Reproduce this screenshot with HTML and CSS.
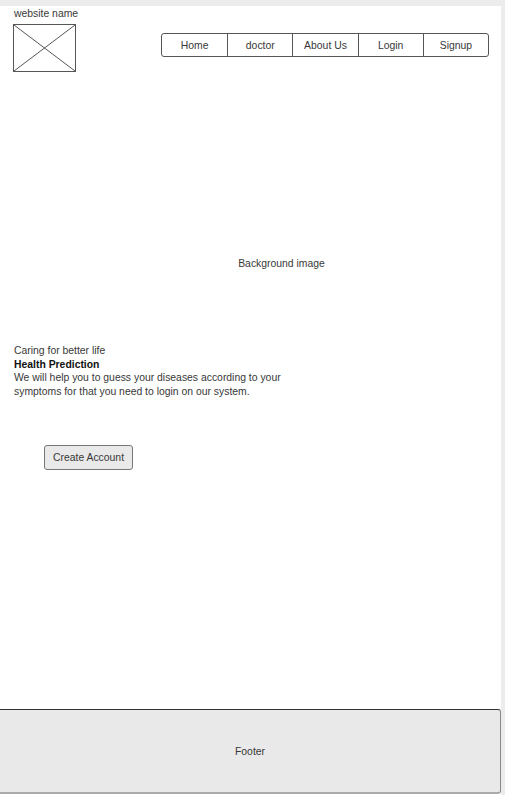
FILE: index.html
```html
<!DOCTYPE html>
<html lang="en">
<head>
<meta charset="utf-8">
<title>Health Prediction</title>
<link rel="stylesheet" href="styles.css">
</head>
<body>
<div class="page">
  <div class="canvas">
    <header class="header">
      <div class="brand">
        <div class="site-name">website name</div>
        <div class="logo">
          <svg width="61" height="46" viewBox="0 0 61 46" preserveAspectRatio="none">
            <line x1="0" y1="0" x2="61" y2="46" stroke="#555" stroke-width="1"/>
            <line x1="61" y1="0" x2="0" y2="46" stroke="#555" stroke-width="1"/>
          </svg>
        </div>
      </div>
      <nav class="nav">
        <a class="nav-item">Home</a>
        <a class="nav-item">doctor</a>
        <a class="nav-item">About Us</a>
        <a class="nav-item">Login</a>
        <a class="nav-item">Signup</a>
      </nav>
    </header>
    <section class="hero">
      <div class="bg-label">Background image</div>
    </section>
    <section class="intro">
      <div>Caring for better life</div>
      <div class="title">Health Prediction</div>
      <p class="desc">We will help you to guess your diseases according to your<br>symptoms for that you need to login on our system.</p>
    </section>
    <div class="actions">
      <button class="btn">Create Account</button>
    </div>
    <footer class="footer">Footer</footer>
  </div>
</div>
</body>
</html>
```
FILE: styles.css
```css
html, body {
  margin: 0;
  padding: 0;
}
body {
  background: #ececec;
  font-family: "Liberation Sans", Arial, sans-serif;
  font-size: 10.4px;
  color: #383838;
}
.page {
  padding-top: 6px;
  height: 795px;
  box-sizing: border-box;
}
.canvas {
  width: 501px;
  height: 789px;
  background: #fff;
  display: flex;
  flex-direction: column;
  box-sizing: border-box;
  padding-bottom: 1px;
}
.header {
  display: flex;
  align-items: flex-start;
  padding-top: 2px;
}
.brand {
  padding-left: 13px;
}
.site-name {
  line-height: 12px;
  padding-left: 1px;
}
.logo {
  margin-top: 4px;
  width: 63px;
  height: 48px;
  border: 1px solid #555;
  box-sizing: border-box;
  display: flex;
}
.logo svg {
  display: block;
}
.nav {
  margin-left: auto;
  margin-right: 12px;
  margin-top: 25px;
  width: 328px;
  height: 24px;
  box-sizing: border-box;
  border: 1px solid #555;
  border-radius: 3px;
  display: grid;
  grid-template-columns: repeat(5, 1fr);
}
.nav-item {
  display: flex;
  align-items: center;
  justify-content: center;
  color: #383838;
  border-left: 1px solid #555;
}
.nav-item:first-child {
  border-left: 0;
}
.hero {
  padding-top: 185px;
  padding-left: 62px;
  text-align: center;
}
.bg-label {
  line-height: 14px;
}
.intro {
  margin-top: 73px;
  padding-left: 14px;
  line-height: 13.5px;
}
.title {
  font-weight: bold;
  color: #111;
}
.desc {
  margin: 0;
}
.actions {
  margin-top: 47px;
  padding-left: 44px;
}
.btn {
  width: 89px;
  height: 25px;
  background: #e9e9e9;
  border: 1px solid #777;
  border-radius: 3px;
  font-family: inherit;
  font-size: 10.4px;
  color: #383838;
  padding: 0;
}
.footer {
  margin-top: auto;
  height: 85px;
  box-sizing: border-box;
  background: #e9e9e9;
  border-top: 1px solid #333;
  border-right: 1px solid #888;
  border-bottom: 2px solid #aaa;
  border-radius: 0 3px 3px 0;
  display: flex;
  align-items: center;
  justify-content: center;
}
```
